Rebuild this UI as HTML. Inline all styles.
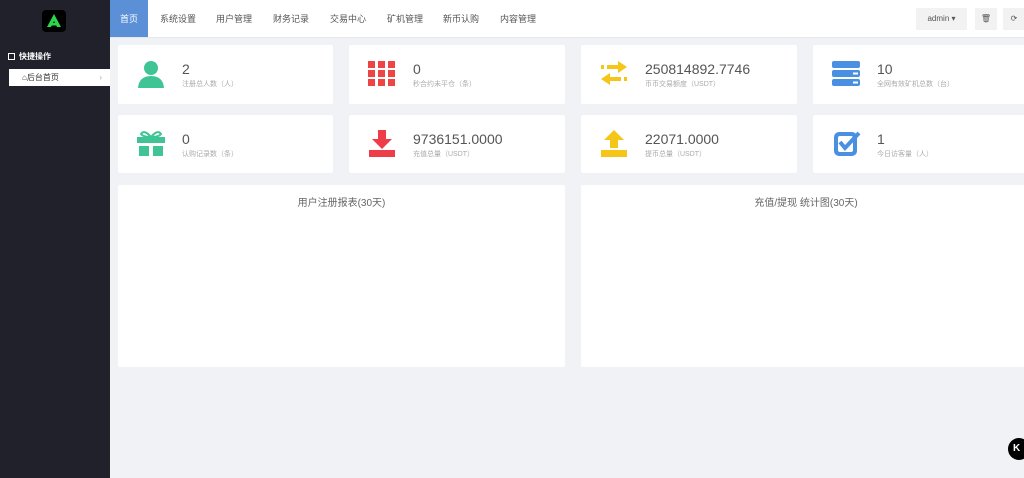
<!DOCTYPE html>
<html><head><meta charset="utf-8"><style>
*{margin:0;padding:0;box-sizing:border-box}
body{width:1024px;height:478px;overflow:hidden;background:#f0f2f6;font-family:"Liberation Sans","Noto Sans CJK SC",sans-serif;position:relative}
.side{position:absolute;left:0;top:0;width:110px;height:478px;background:#20212b}
.logo{position:absolute;left:42px;top:10px;width:24px;height:22px;background:#000;border-radius:4px}
.top{position:absolute;left:110px;top:0;right:0;height:38px;background:#fff;border-bottom:1px solid #e8e8ec}
.nav{position:absolute;top:0;height:37px;line-height:39px;font-size:9px;color:#555}
.card{position:absolute;background:#fff;border-radius:2px}
.num{position:absolute;left:64px;top:16px;font-size:14px;color:#555}
.lbl{position:absolute;left:64px;top:34px;font-size:7px;color:#aaa}
.ic{position:absolute;left:18px;top:14px}
.btn{position:absolute;top:8px;height:22px;background:#f2f2f2;font-size:8px;color:#555;line-height:22px;text-align:center}
.ct{position:absolute;top:9px;width:100%;text-align:center;font-size:10px;color:#666}
</style></head><body>
<div class="side">
 <div class="logo"><svg width="24" height="22" viewBox="0 0 24 22"><path d="M12 4 L5 17 H9 L12 11 L15 17 H19 Z" fill="#2bd64a"/><rect x="8" y="13" width="8" height="2.5" fill="#2bd64a"/></svg></div>
 <div style="position:absolute;left:8px;top:51px;font-size:8px;color:#fff;font-weight:bold"><span style="display:inline-block;width:7px;height:7px;border:1px solid #fff;margin-right:4px;vertical-align:-1px"></span>快捷操作</div>
 <div style="position:absolute;left:9px;top:69px;width:101px;height:17px;background:#fff;font-size:8px;line-height:17px;color:#333;padding-left:13px">⌂后台首页<span style="position:absolute;right:8px;color:#aaa">›</span></div>
</div>
<div class="top">
 <div class="nav" style="left:0;width:38px;background:#5b8fd6;color:#fff;text-align:center">首页</div>
 <div class="nav" style="left:50px">系统设置</div>
 <div class="nav" style="left:106px">用户管理</div>
 <div class="nav" style="left:163px">财务记录</div>
 <div class="nav" style="left:220px">交易中心</div>
 <div class="nav" style="left:277px">矿机管理</div>
 <div class="nav" style="left:333px">新币认购</div>
 <div class="nav" style="left:390px">内容管理</div>
 <div class="btn" style="left:806px;width:51px">admin ▾</div>
 <div class="btn" style="left:865px;width:22px">🗑</div>
 <div class="btn" style="left:893px;width:22px">⟳</div>
</div>

<div class="card" style="left:118px;top:45px;width:215px;height:59px"><svg class="ic" width="30" height="30" viewBox="0 0 30 30"><circle cx="15" cy="9" r="7" fill="#3ec495"/><path d="M2 29 Q3 17 15 17 Q27 17 28 29Z" fill="#3ec495"/></svg><div class="num">2</div><div class="lbl">注册总人数（人）</div></div>
<div class="card" style="left:349px;top:45px;width:216px;height:59px"><svg class="ic" width="30" height="30" viewBox="0 0 30 30" fill="#ee4444"><rect x="1" y="2" width="7" height="7"/><rect x="11" y="2" width="7" height="7"/><rect x="21" y="2" width="7" height="7"/><rect x="1" y="11" width="7" height="7"/><rect x="11" y="11" width="7" height="7"/><rect x="21" y="11" width="7" height="7"/><rect x="1" y="20" width="7" height="7"/><rect x="11" y="20" width="7" height="7"/><rect x="21" y="20" width="7" height="7"/></svg><div class="num">0</div><div class="lbl">秒合约未平仓（条）</div></div>
<div class="card" style="left:581px;top:45px;width:216px;height:59px"><svg class="ic" width="30" height="30" viewBox="0 0 30 30" fill="#f5c518"><rect x="8" y="6" width="12" height="4"/><path d="M19 2 L28 8 L19 14Z"/><rect x="2" y="6" width="3" height="4"/><rect x="10" y="18" width="12" height="4"/><path d="M11 14 L2 20 L11 26Z"/><rect x="25" y="18" width="3" height="4"/></svg><div class="num">250814892.7746</div><div class="lbl">币币交易额度（USDT）</div></div>
<div class="card" style="left:813px;top:45px;width:220px;height:59px"><svg class="ic" width="30" height="30" viewBox="0 0 30 30" fill="#4a90e2"><rect x="1" y="2" width="28" height="7" rx="2"/><rect x="1" y="11" width="28" height="7" rx="2"/><rect x="1" y="20" width="28" height="7" rx="2"/><rect x="22" y="13.5" width="5" height="2" fill="#fff"/><rect x="22" y="22.5" width="5" height="2" fill="#fff"/></svg><div class="num">10</div><div class="lbl">全网有效矿机总数（台）</div></div>

<div class="card" style="left:118px;top:115px;width:215px;height:58px"><svg class="ic" width="30" height="30" viewBox="0 0 30 30" fill="#3ec495"><rect x="1" y="8" width="28" height="6"/><path d="M15 8 Q8 0 5 5 Q7 8 15 8 Q22 0 25 5 Q23 8 15 8Z" fill="none" stroke="#3ec495" stroke-width="2"/><rect x="3" y="17" width="10" height="10"/><rect x="17" y="17" width="10" height="10"/></svg><div class="num">0</div><div class="lbl">认购记录数（条）</div></div>
<div class="card" style="left:349px;top:115px;width:216px;height:58px"><svg class="ic" width="30" height="30" viewBox="0 0 30 30" fill="#ee3d48"><rect x="11" y="1" width="8" height="10"/><path d="M5 10 H25 L15 20Z"/><rect x="2" y="21" width="26" height="7"/></svg><div class="num">9736151.0000</div><div class="lbl">充值总量（USDT）</div></div>
<div class="card" style="left:581px;top:115px;width:216px;height:58px"><svg class="ic" width="30" height="30" viewBox="0 0 30 30" fill="#f5c518"><path d="M15 1 L25 11 H5Z"/><rect x="11" y="10" width="8" height="9"/><rect x="2" y="21" width="26" height="7"/></svg><div class="num">22071.0000</div><div class="lbl">提币总量（USDT）</div></div>
<div class="card" style="left:813px;top:115px;width:220px;height:58px"><svg class="ic" width="30" height="30" viewBox="0 0 30 30"><rect x="3" y="3" width="23" height="24" rx="5" fill="#4a90e2"/><rect x="7" y="7" width="15" height="16" rx="2" fill="#fff"/><path d="M9 13 L14 19 L28 4" stroke="#4a90e2" stroke-width="4" fill="none"/></svg><div class="num">1</div><div class="lbl">今日访客量（人）</div></div>

<div class="card" style="left:118px;top:185px;width:447px;height:182px"><div class="ct">用户注册报表(30天)</div></div>
<div class="card" style="left:581px;top:185px;width:450px;height:182px"><div class="ct" style="width:450px;left:0">充值/提现 统计图(30天)</div></div>
<div style="position:absolute;left:1008px;top:438px;width:22px;height:22px;border-radius:50%;background:#000;color:#fff;font-size:10px;font-weight:bold;line-height:22px;padding-left:5px">K</div>
</body></html>
